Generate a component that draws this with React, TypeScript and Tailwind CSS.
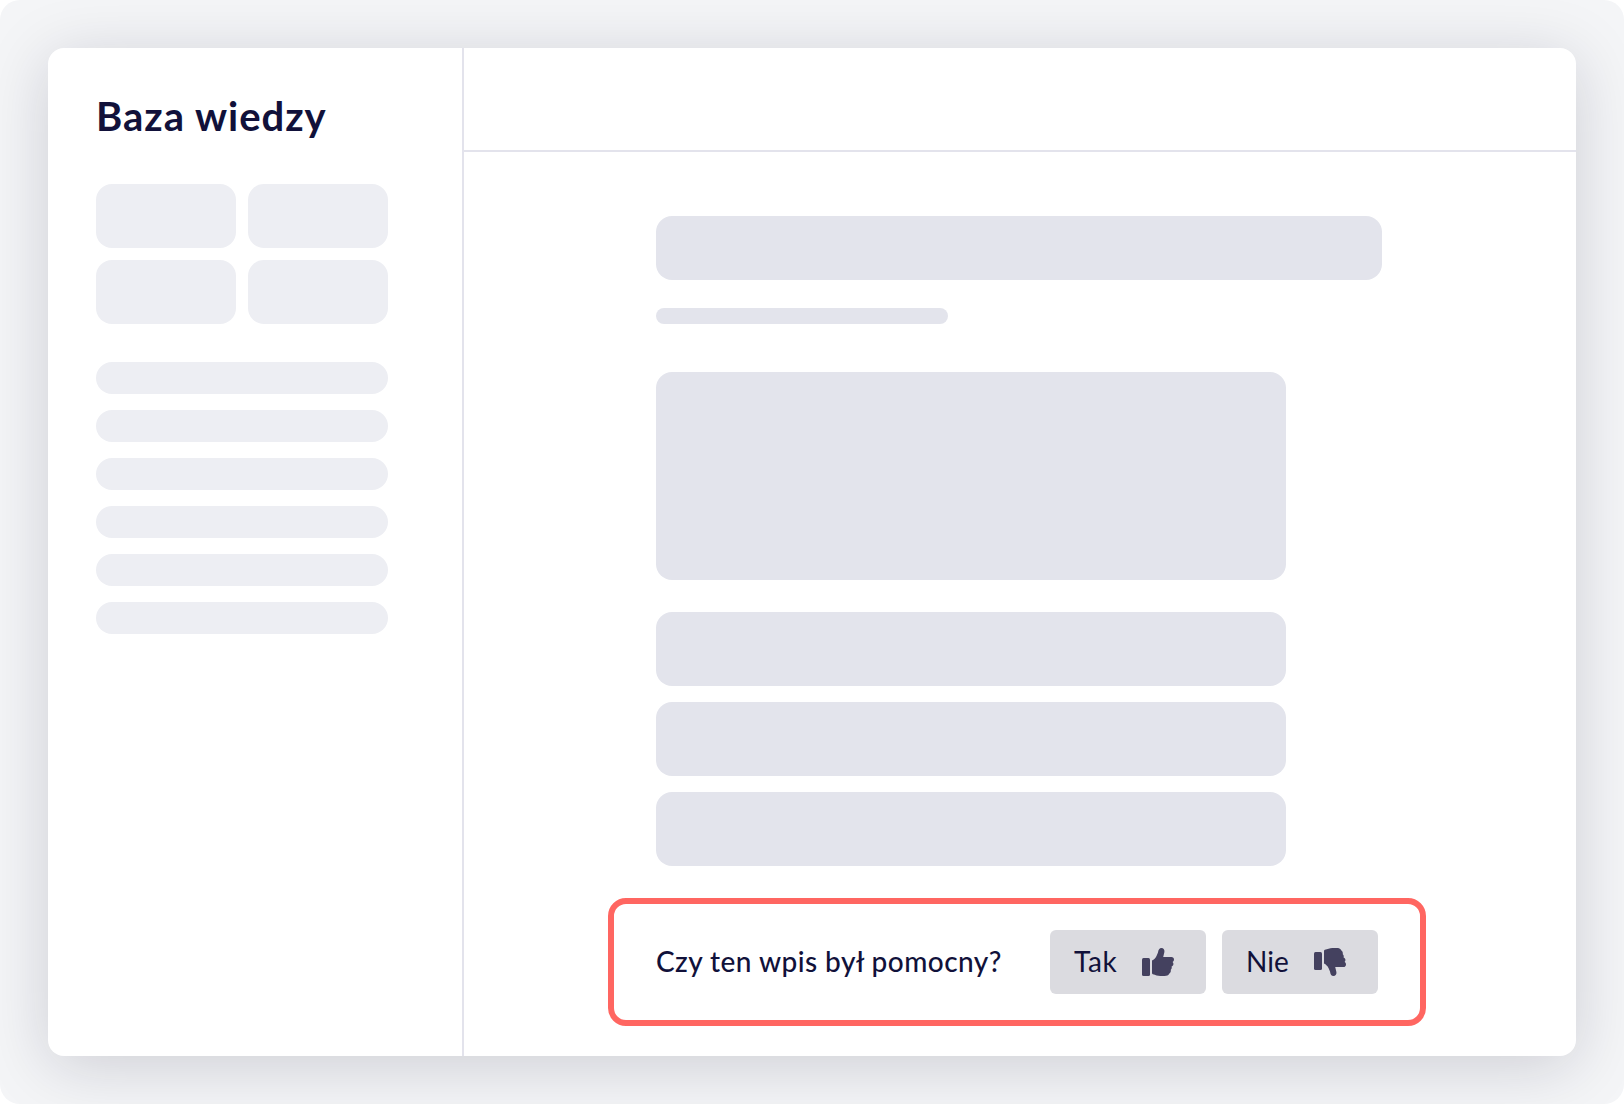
import React from "react";

const font = { fontFamily: '"Lato", "Noto Sans", sans-serif' };

const ThumbUp = () => (
  <svg width="32" height="28" viewBox="0 0 32 28" fill="#44415f">
    <rect x="0" y="10" width="8" height="18" rx="1.5" />
    <path d="M10 12.5 C12 11.5 13.5 10 14.5 8 L16 4.5 C16.4 1.5 17.5 0 19.4 0 C21.6 0 22.8 1.8 22.4 4 L21.2 9 L29.4 9 C31 9 32 10.2 32 11.6 C32 12.8 31.4 13.6 30.6 14 C31.4 14.8 31.7 16 31.2 17 C30.8 17.8 30.2 18.4 29.6 18.6 C30 19.8 29.8 21 28.8 21.8 C29 23.4 28.6 24.8 27.4 25.6 C26.4 27.4 24.8 28 22.6 28 L18.4 28 C15.6 28 13.6 26.9 10.8 26.2 C10.3 26.1 10 25.6 10 25 Z" />
  </svg>
);

const ThumbDown = () => (
  <svg width="32" height="28" viewBox="0 0 32 28" fill="#44415f">
    <rect x="0" y="4" width="8" height="18" rx="1.5" />
    <g transform="translate(0 28) scale(1 -1)">
      <path d="M10 12.5 C12 11.5 13.5 10 14.5 8 L16 4.5 C16.4 1.5 17.5 0 19.4 0 C21.6 0 22.8 1.8 22.4 4 L21.2 9 L29.4 9 C31 9 32 10.2 32 11.6 C32 12.8 31.4 13.6 30.6 14 C31.4 14.8 31.7 16 31.2 17 C30.8 17.8 30.2 18.4 29.6 18.6 C30 19.8 29.8 21 28.8 21.8 C29 23.4 28.6 24.8 27.4 25.6 C26.4 27.4 24.8 28 22.6 28 L18.4 28 C15.6 28 13.6 26.9 10.8 26.2 C10.3 26.1 10 25.6 10 25 Z" />
    </g>
  </svg>
);

const App = () => {
  return (
    <div className="w-[1624px] h-[1104px] bg-white" style={font}>
      <div className="w-full h-full p-12 bg-[#f4f5f7] rounded-[20px] overflow-hidden">
        <div className="h-full flex bg-white rounded-2xl shadow-[0_10px_64px_rgba(18,18,50,0.17)]">
          <aside className="w-[416px] shrink-0 border-r-2 border-[#e3e3ec] pl-12 pr-[74px]">
            <h1 className="h-[136px] pt-[44px] text-[40px] leading-[48px] font-bold tracking-[1px] text-[#11113a]">
              Baza wiedzy
            </h1>
            <div className="grid grid-cols-2 gap-3">
              <div className="h-16 rounded-2xl bg-[#edeef3]" />
              <div className="h-16 rounded-2xl bg-[#edeef3]" />
              <div className="h-16 rounded-2xl bg-[#edeef3]" />
              <div className="h-16 rounded-2xl bg-[#edeef3]" />
            </div>
            <div className="mt-[38px] flex flex-col gap-4">
              <div className="h-8 rounded-2xl bg-[#edeef3]" />
              <div className="h-8 rounded-2xl bg-[#edeef3]" />
              <div className="h-8 rounded-2xl bg-[#edeef3]" />
              <div className="h-8 rounded-2xl bg-[#edeef3]" />
              <div className="h-8 rounded-2xl bg-[#edeef3]" />
              <div className="h-8 rounded-2xl bg-[#edeef3]" />
            </div>
          </aside>
          <main className="flex-1 flex flex-col">
            <div className="h-[104px] shrink-0 border-b-2 border-[#e3e3ec]" />
            <div className="pl-[192px] pt-16">
              <div className="w-[726px] h-16 rounded-2xl bg-[#e3e4ec]" />
              <div className="mt-7 w-[292px] h-4 rounded-lg bg-[#e3e4ec]" />
              <div className="mt-12 w-[630px] h-[208px] rounded-2xl bg-[#e3e4ec]" />
              <div className="mt-8 flex flex-col gap-4 w-[630px]">
                <div className="h-[74px] rounded-2xl bg-[#e3e4ec]" />
                <div className="h-[74px] rounded-2xl bg-[#e3e4ec]" />
                <div className="h-[74px] rounded-2xl bg-[#e3e4ec]" />
              </div>
              <div className="mt-8 -ml-12 w-[818px] h-32 flex items-center justify-between border-[6px] border-[#ff6661] rounded-[18px] px-[42px] text-[#11113a]">
                <span className="-mt-0.5 text-[28px] font-medium tracking-[0.45px]">Czy ten wpis był pomocny?</span>
                <div className="flex gap-4 text-[28px]">
                  <button className="w-[156px] h-16 pl-6 pr-8 flex items-center justify-between rounded-md bg-[#dbdbe0]">
                    <span className="-mt-0.5 tracking-[0.6px]">Tak</span>
                    <ThumbUp />
                  </button>
                  <button className="w-[156px] h-16 pl-6 pr-8 flex items-center justify-between rounded-md bg-[#dbdbe0]">
                    <span className="-mt-0.5">Nie</span>
                    <ThumbDown />
                  </button>
                </div>
              </div>
            </div>
          </main>
        </div>
      </div>
    </div>
  );
};

export default App;
